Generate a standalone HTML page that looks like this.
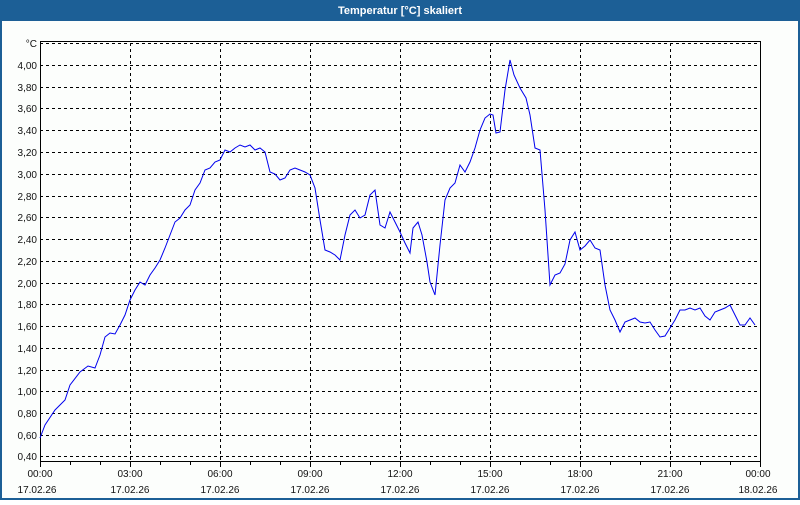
<!DOCTYPE html>
<html><head><style>
body{margin:0;width:800px;height:500px;overflow:hidden;background:#fff;font-family:"Liberation Sans",sans-serif}
</style></head><body>
<svg width="800" height="500" xmlns="http://www.w3.org/2000/svg" font-family="Liberation Sans, sans-serif">
<rect x="0" y="0" width="800" height="500" fill="#1c5f96"/>
<rect x="2" y="21" width="796" height="477" fill="#fcfefc"/>
<text x="400" y="14" fill="#fff" font-size="11" font-weight="bold" text-anchor="middle">Temperatur [°C] skaliert</text>
<g stroke="#000" stroke-width="1" stroke-dasharray="3,3" fill="none">
<path d="M40 43.5H760M40 65.5H760M40 87.5H760M40 108.5H760M40 130.5H760M40 152.5H760M40 174.5H760M40 196.5H760M40 217.5H760M40 239.5H760M40 261.5H760M40 283.5H760M40 304.5H760M40 326.5H760M40 348.5H760M40 370.5H760M40 391.5H760M40 413.5H760M40 435.5H760M40 456.5H760"/>
<path d="M130.5 43V461M220.5 43V461M310.5 43V461M400.5 43V461M490.5 43V461M580.5 43V461M670.5 43V461"/>
</g>
<g stroke="#000" stroke-width="1" fill="none">
<path d="M40.5 41V467M40 461.5H761M40 41.5H761M760.5 41V461"/>
<path d="M70.5 461V465M100.5 461V465M130.5 461V467M160.5 461V465M190.5 461V465M220.5 461V467M250.5 461V465M280.5 461V465M310.5 461V467M340.5 461V465M370.5 461V465M400.5 461V467M430.5 461V465M460.5 461V465M490.5 461V467M520.5 461V465M550.5 461V465M580.5 461V467M610.5 461V465M640.5 461V465M670.5 461V467M700.5 461V465M730.5 461V465M760.5 461V467"/>
</g>
<g font-size="10" fill="#111" text-anchor="end">
<text x="37" y="47">°C</text>
<text x="37" y="69">4,00</text><text x="37" y="91">3,80</text><text x="37" y="112">3,60</text><text x="37" y="134">3,40</text><text x="37" y="156">3,20</text><text x="37" y="178">3,00</text><text x="37" y="200">2,80</text><text x="37" y="221">2,60</text><text x="37" y="243">2,40</text><text x="37" y="265">2,20</text><text x="37" y="287">2,00</text><text x="37" y="308">1,80</text><text x="37" y="330">1,60</text><text x="37" y="352">1,40</text><text x="37" y="374">1,20</text><text x="37" y="395">1,00</text><text x="37" y="417">0,80</text><text x="37" y="439">0,60</text><text x="37" y="460">0,40</text>
</g>
<g font-size="10" fill="#111" text-anchor="middle">
<text x="40" y="477">00:00</text><text x="130" y="477">03:00</text><text x="220" y="477">06:00</text><text x="310" y="477">09:00</text><text x="400" y="477">12:00</text><text x="490" y="477">15:00</text><text x="580" y="477">18:00</text><text x="670" y="477">21:00</text><text x="758" y="477">00:00</text>
<text x="37" y="493">17.02.26</text><text x="130" y="493">17.02.26</text><text x="220" y="493">17.02.26</text><text x="310" y="493">17.02.26</text><text x="400" y="493">17.02.26</text><text x="490" y="493">17.02.26</text><text x="580" y="493">17.02.26</text><text x="670" y="493">17.02.26</text><text x="758" y="493">18.02.26</text>
</g>
<polyline fill="none" stroke="#0000ee" stroke-width="1" points="40,438 45,425 55,410 65,400 70,385 80,372 88,366 95,368 100,355 105,337 110,333 115,334 120,325 125,315 130,300 135,290 140,282 145,285 150,275 155,268 160,260 165,248 170,235 175,222 180,218 185,210 190,205 195,190 200,183 205,170 210,168 215,162 220,160 225,150 230,152 235,148 240,145 245,147 250,145 255,150 260,148 265,152 270,172 275,174 280,180 285,178 290,170 295,168 300,170 305,172 310,175 315,188 320,220 325,250 330,252 335,255 340,260 345,235 350,215 355,210 360,218 365,215 370,195 375,190 380,225 385,228 390,212 395,222 400,232 405,243 410,253 413,228 418,222 422,235 427,262 430,282 435,295 440,245 445,200 450,188 455,183 460,165 465,172 470,162 475,148 480,130 485,118 490,114 493,115 496,133 500,132 505,90 510,60 514,75 520,88 526,98 530,115 535,148 540,150 545,210 550,285 555,275 560,273 565,264 570,240 575,232 580,250 585,246 590,240 595,248 600,250 605,285 610,310 615,320 620,332 625,322 630,320 635,318 640,322 645,323 650,322 655,330 660,337 665,336 670,328 675,320 680,310 685,310 690,308 695,310 700,308 705,316 710,320 715,312 720,310 725,308 730,305 735,315 740,325 745,325 750,318 755,325"/>
</svg>
</body></html>
